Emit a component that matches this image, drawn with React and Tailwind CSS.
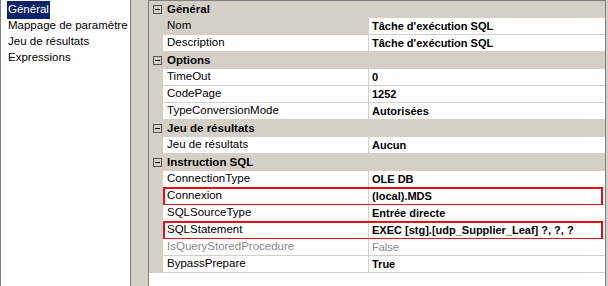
import React from 'react';

const sections = [
  {
    title: 'Général',
    rows: [
      { label: 'Nom', value: 'Tâche d\'exécution SQL', selected: true },
      { label: 'Description', value: 'Tâche d\'exécution SQL' },
    ],
  },
  {
    title: 'Options',
    rows: [
      { label: 'TimeOut', value: '0' },
      { label: 'CodePage', value: '1252' },
      { label: 'TypeConversionMode', value: 'Autorisées' },
    ],
  },
  {
    title: 'Jeu de résultats',
    rows: [{ label: 'Jeu de résultats', value: 'Aucun' }],
  },
  {
    title: 'Instruction SQL',
    rows: [
      { label: 'ConnectionType', value: 'OLE DB' },
      { label: 'Connexion', value: '(local).MDS', marked: true },
      { label: 'SQLSourceType', value: 'Entrée directe' },
      { label: 'SQLStatement', value: 'EXEC [stg].[udp_Supplier_Leaf] ?, ?, ?', marked: true },
      { label: 'IsQueryStoredProcedure', value: 'False', disabled: true },
      { label: 'BypassPrepare', value: 'True' },
    ],
  },
];

const pages = ['Général', 'Mappage de paramètre', 'Jeu de résultats', 'Expressions'];

function Collapse() {
  return (
    <div className="relative w-[9px] h-[9px] border border-[#555]">
      <div className="absolute left-[1px] top-[3px] w-[5px] h-px bg-black" />
    </div>
  );
}

function SectionHeader({ title }) {
  return (
    <div className="flex h-[17px] items-center bg-[#d4d0c8]">
      <div className="w-[14px] flex justify-center pl-[2px]">
        <Collapse />
      </div>
      <div className="pl-[4px] font-bold text-[11.5px] text-black">{title}</div>
    </div>
  );
}

function PropertyRow({ row }) {
  return (
    <div className="flex h-[17px]">
      <div className="w-[14px] bg-[#d4d0c8]" />
      <div className="relative flex flex-1 border-b border-[#d4d0c8]">
        <div
          className={
            'w-[205px] pl-[4px] flex items-center text-[11.5px] ' +
            (row.selected ? 'bg-[#d4d0c8] ' : 'bg-white ') +
            (row.disabled ? 'text-[#8a8a8a]' : 'text-black')
          }
        >
          {row.label}
        </div>
        <div
          className={
            'flex-1 border-l border-[#d4d0c8] pl-[3px] flex items-center text-[11px] bg-white ' +
            (row.disabled ? 'text-[#8a8a8a]' : 'font-bold text-black')
          }
        >
          {row.value}
        </div>
        {row.marked && (
          <div className="absolute left-0 right-[2px] top-[-1px] bottom-[-2px] border-[2px] border-[#e3101b]" />
        )}
      </div>
    </div>
  );
}

export default function App() {
  return (
    <div
      className="flex w-[608px] h-[286px] bg-[#d4d0c8] overflow-hidden"
      style={{ fontFamily: '"Liberation Sans", Arial, sans-serif' }}
    >
      {/* Pages list */}
      <div className="w-[131px] h-full bg-white border-l border-r border-[#808080] pt-[2px]">
        {pages.map((p, i) => (
          <div key={p} className="h-[16px] flex items-center pl-[6px] text-[11.5px]">
            <span className={i === 0 ? 'bg-[#0a246a] text-white px-[1px]' : 'text-black px-[1px]'}>
              {p}
            </span>
          </div>
        ))}
      </div>

      {/* Property grid */}
      <div className="ml-[17px] w-[458px] h-full bg-white border-l border-t border-r border-[#808080]">
        {sections.map((s) => (
          <div key={s.title}>
            <SectionHeader title={s.title} />
            {s.rows.map((r) => (
              <PropertyRow key={r.label} row={r} />
            ))}
          </div>
        ))}
      </div>
    </div>
  );
}
